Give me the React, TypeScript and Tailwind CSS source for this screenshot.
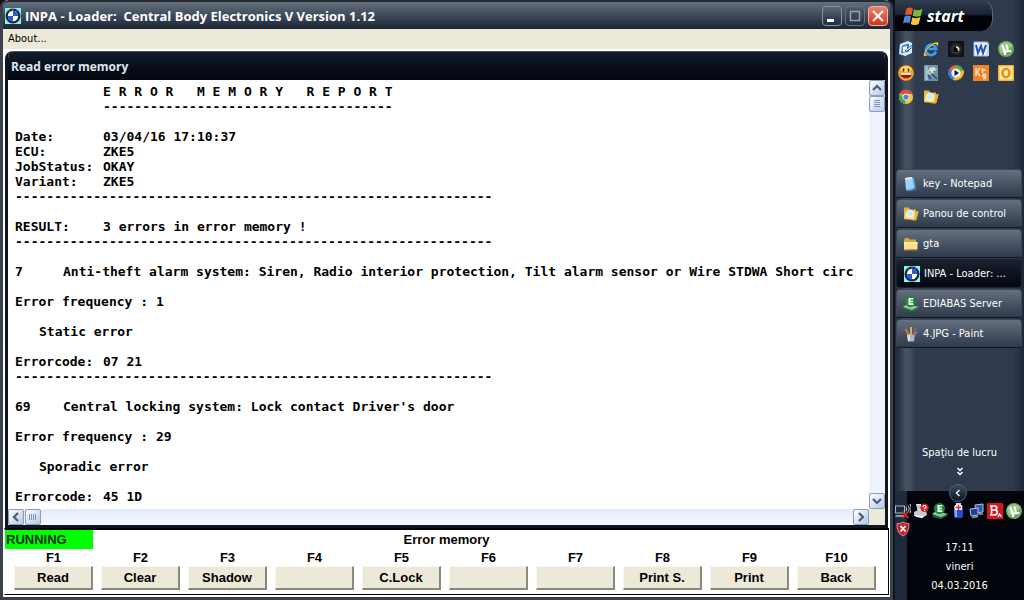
import type { ReactNode } from 'react';

const rule = '-'.repeat(61);

const header = [
  { label: 'Date:', value: '03/04/16 17:10:37' },
  { label: 'ECU:', value: 'ZKE5' },
  { label: 'JobStatus:', value: 'OKAY' },
  { label: 'Variant:', value: 'ZKE5' },
];

const errors = [
  {
    id: '7',
    text: 'Anti-theft alarm system: Siren, Radio interior protection, Tilt alarm sensor or Wire STDWA Short circ',
    frequency: '1',
    kind: 'Static error',
    code: '07 21',
  },
  {
    id: '69',
    text: "Central locking system: Lock contact Driver's door",
    frequency: '29',
    kind: 'Sporadic error',
    code: '45 1D',
  },
];

const functionKeys = [
  { id: 'F1', label: 'Read' },
  { id: 'F2', label: 'Clear' },
  { id: 'F3', label: 'Shadow' },
  { id: 'F4', label: '' },
  { id: 'F5', label: 'C.Lock' },
  { id: 'F6', label: '' },
  { id: 'F7', label: '' },
  { id: 'F8', label: 'Print S.' },
  { id: 'F9', label: 'Print' },
  { id: 'F10', label: 'Back' },
];

function Icon({ children }: { children: ReactNode }) {
  return <svg viewBox="0 0 16 16" className="w-4 h-4 shrink-0" aria-hidden="true">{children}</svg>;
}

function BmwIcon() {
  return (
    <Icon>
      <rect width="16" height="16" fill="#7df3f5" />
      <circle cx="8" cy="8" r="7.500" fill="#22253a" />
      <circle cx="8" cy="8" r="5.200" fill="#fff" />
      <path d="M8 8V2.800A5.200 5.200 0 0 1 13.200 8zM8 8v5.200A5.200 5.200 0 0 1 2.800 8z" fill="#2a5bd0" />
      <path d="M4 2.500l1 1M8 1.300v1M12 2.500l-1 1" stroke="#c9cede" strokeWidth=".8" />
    </Icon>
  );
}

function NotepadIcon() {
  return (
    <Icon>
      <path d="M4 1l7 1 2 12-9 1z" fill="#5fa9dc" />
      <path d="M2 2l7-1 2 11-8 2z" fill="#9bd4f5" />
      <path d="M2 2l7-1 .3 2-7 1z" fill="#d9e8f0" />
      <path d="M9 14l4-3 1 3z" fill="#2d6fa8" />
    </Icon>
  );
}

function FolderIcon() {
  return (
    <Icon>
      <path d="M1 4l1-2h4l1 1.500h6V13H1z" fill="#d9a62e" />
      <path d="M1 14V6h13.500v7.500z" fill="#fbe28a" />
      <path d="M1 6h13.500v1.500H1z" fill="#fff3bd" />
      <path d="M1 13.500h13.500v1H1z" fill="#b07e18" />
    </Icon>
  );
}

function SearchFolderIcon() {
  return (
    <Icon>
      <path d="M1 1.500h5l1 2h6v9.500H1z" fill="#e3b544" />
      <path d="M1 13L3 5.500h12.500l-2.500 9z" fill="#fbe28a" />
      <circle cx="7" cy="7.500" r="3.400" fill="#c8e8f8" stroke="#f8f6ec" />
      <path d="M12 5.500h3.500L13 14.500l-2-1z" fill="#e6b23c" />
      <path d="M1 13l12 1.500" stroke="#a87a1c" />
    </Icon>
  );
}

function EdiabasIcon() {
  return (
    <Icon>
      <path d="M0 11l4-3 12 3-6 4z" fill="#8cc79a" />
      <path d="M1 12l8 2 6-3v2l-6 3-8-2z" fill="#256b34" />
      <circle cx="7.500" cy="5.500" r="5.500" fill="#1c8a35" />
      <path d="M5.500 2h4.800v1.600H7.300v1.100h2.700v1.500H7.300v1.100h3v1.600H5.500z" fill="#fff" />
    </Icon>
  );
}

function PaintIcon() {
  return (
    <Icon>
      <path d="M4 8h8l-1 7.500H5z" fill="#a9b4c0" />
      <path d="M4 8h3v7H5z" fill="#dde5ec" />
      <path d="M6 9L2.500 3" stroke="#d5763e" strokeWidth="2" />
      <path d="M8 8V1" stroke="#d0b06a" strokeWidth="2" />
      <path d="M10 9l3-7" stroke="#b7553f" strokeWidth="2" />
      <path d="M11 9l3-3" stroke="#5c8fd0" strokeWidth="1.500" />
    </Icon>
  );
}

function DesktopIcon() {
  return (
    <Icon>
      <path d="M2 3l8-3 4 2v10l-7 3-6-2z" fill="#d6ecfb" />
      <path d="M4 4.500l7-2v8l-8 2z" fill="#3e86c9" />
      <path d="M5 6l4-1v5l-4 1z" fill="#fff" />
      <path d="M6.500 9.500L14 4l1.500 1.500L9 11z" fill="#2a5fa5" />
      <path d="M8 9.500l6-4" stroke="#fff" />
    </Icon>
  );
}

function ExplorerIcon() {
  return (
    <Icon>
      <path d="M13 10.500A5.200 5.200 0 1 1 13.200 8H5.500" fill="none" stroke="#3aa0ee" strokeWidth="2.600" />
      <path d="M1 15C-1 11 10 0 15 1.500c1 1 0 3-1 4 0-3-2-3-5-1C5 7 2 11 2.500 13c.5 1 2 0 3 0-1 1.500-3.500 3-4.500 2z" fill="#f3c33c" />
    </Icon>
  );
}

function LensIcon() {
  return (
    <Icon>
      <rect width="16" height="16" rx="1" fill="#121315" />
      <circle cx="8" cy="8" r="6" fill="#26282b" />
      <circle cx="8" cy="8.500" r="3.500" fill="#050505" stroke="#4a4a4a" />
      <path d="M8 5.500c3-.5 4 2 3 4.500l-1.500-.5c.5-1.500 0-2.500-1.500-2.500z" fill="#e0e0e0" />
    </Icon>
  );
}

function WordIcon() {
  return (
    <Icon>
      <path d="M1 1h12l3 2v12H1z" fill="#e8f1fb" />
      <path d="M1 1h14v14H1z" fill="none" stroke="#9dbce2" />
      <path d="M3 4l2 8 3-7 2 7 3-8" fill="none" stroke="#1e56a8" strokeWidth="2" />
    </Icon>
  );
}

function TorrentIcon() {
  return (
    <Icon>
      <circle cx="8" cy="8" r="8" fill="#6fa85c" />
      <path d="M1 6a8 8 0 0 1 14-1L3 13z" fill="#9cc68a" />
      <path d="M4 4l2.500 5.500c1 2 3.500 1.500 3.200-.5L8.500 3.500M10 9.500c1 1 2 .8 3-.2M5.500 8l1.800 6" fill="none" stroke="#fff" strokeWidth="2" />
    </Icon>
  );
}

function SmileyIcon() {
  return (
    <Icon>
      <circle cx="8" cy="8" r="7.800" fill="#f6a623" />
      <ellipse cx="8" cy="4" rx="5.500" ry="3" fill="#ffd95c" />
      <path d="M5.500 3.500v3M10.500 3.500v3" stroke="#4a1d00" strokeWidth="1.500" />
      <path d="M2 8h12c0 7-12 7-12 0z" fill="#a41717" />
      <path d="M2.500 8h11v1.800h-11z" fill="#fff" />
    </Icon>
  );
}

function MapIcon() {
  return (
    <Icon>
      <rect x="1" width="14" height="16" fill="#6f93ad" />
      <path d="M2 1h3v14H2z" fill="#9fb8c8" />
      <path d="M6 3l5-1 3 3-4 1 1 3-3-2z" fill="#d8dfc0" />
      <path d="M8 8l6 6M5 10l3 4" stroke="#2e4a60" strokeWidth="1.500" />
      <circle cx="7" cy="7" r="2" fill="none" stroke="#e9f3f7" />
    </Icon>
  );
}

function MediaIcon() {
  return (
    <Icon>
      <path d="M8 8V0a8 8 0 0 1 7.500 6z" fill="#57a944" />
      <path d="M8 8V0A8 8 0 0 0 1 5z" fill="#e76a26" />
      <path d="M8 8L1 4a8 8 0 0 0 4 11z" fill="#3c7ddd" />
      <path d="M8 8l8-3c1 6-5 12-11 10z" fill="#f3b72b" />
      <circle cx="8" cy="8" r="4.600" fill="#f4f7fb" />
      <path d="M6.500 5l4.500 3-4.500 3z" fill="#101a30" />
    </Icon>
  );
}

function KtIcon() {
  return (
    <Icon>
      <rect width="16" height="16" fill="#f08427" />
      <path d="M3 3v8M7 3L4 7l3 4M9.500 3v5M8.500 5h4M10 9.500h3M10 9.500v2h2.500v2H10" fill="none" stroke="#fbe3c8" strokeWidth="1.400" />
    </Icon>
  );
}

function OutlookIcon() {
  return (
    <Icon>
      <rect width="16" height="16" rx="1" fill="#f3b52e" />
      <rect x="1.500" y="1.500" width="13" height="13" fill="#fce9b0" />
      <ellipse cx="8" cy="8" rx="3.500" ry="4.300" fill="none" stroke="#e0930f" strokeWidth="2.600" />
    </Icon>
  );
}

function ChromeIcon() {
  return (
    <Icon>
      <circle cx="8" cy="8" r="7" fill="#f4c63d" />
      <path d="M8 8L2 4a7 7 0 0 1 12.500 1H8z" fill="#dd4b3b" />
      <path d="M8 8l-1 7A7 7 0 0 1 2 4.300L5.500 10z" fill="#4aa353" />
      <circle cx="8" cy="8" r="3.400" fill="#f1f3f5" />
      <circle cx="8" cy="8" r="2.600" fill="#4a86d8" />
    </Icon>
  );
}

function WirelessIcon() {
  return (
    <Icon>
      <rect x=".5" y="3" width="9" height="7" fill="#1b2740" stroke="#aab6cc" />
      <path d="M1 12h8l1 2H0z" fill="#8b95a8" />
      <path d="M11 4c1 1.500 1 2.500 0 4M13 2.500c1.500 2 1.500 4.500 0 6.500M15 1c1.500 3 1.500 6 0 9" fill="none" stroke="#d5d9e0" />
      <path d="M7.500 8.500l6 6.500M13.500 8.500l-6 6.500" stroke="#d8281e" strokeWidth="1.700" />
    </Icon>
  );
}

function PrinterIcon() {
  return (
    <Icon>
      <path d="M3 1h5l2 8H5z" fill="#f2f4f7" />
      <path d="M4 3h3M4.500 5h3" stroke="#8f9aac" />
      <path d="M1 9l4-2h8l1 5-5 3-8-2z" fill="#c5cbd4" />
      <path d="M2 12l8 1v2l-7-1z" fill="#eef0f3" />
      <circle cx="11.500" cy="4.800" r="4.200" fill="#d8231d" />
      <path d="M10 4c0-2 3-2 3 0 0 1-1.500 1-1.500 2.200M11.500 7v1" fill="none" stroke="#fff" strokeWidth="1.200" />
    </Icon>
  );
}

function BatteryIcon() {
  return (
    <Icon>
      <path d="M6 0h5v3H6z" fill="#d8dde6" />
      <rect x="4" y="2" width="9" height="13" rx="2" fill="#2a4bd0" />
      <path d="M4 3h3v11H5z" fill="#8fa6f2" />
      <path d="M5 2h7v5H5z" fill="#f0eef2" />
      <path d="M8.500 2v5M6 4.500h5" stroke="#d93030" strokeWidth="1.300" />
    </Icon>
  );
}

function NetworkIcon() {
  return (
    <Icon>
      <path d="M6 2l8-1v8l-7 1z" fill="#3558b8" stroke="#b2bfdc" />
      <path d="M1 6l8-1v7l-7 1z" fill="#23408f" stroke="#b2bfdc" />
      <path d="M3 14.500l6-1M10 11h4" stroke="#99a5bf" strokeWidth="1.500" />
    </Icon>
  );
}

function BitdefenderIcon() {
  return (
    <Icon>
      <rect width="16" height="16" rx="1" fill="#d9161c" />
      <path d="M4.500 3v9M3 3h4.500c3 0 3 4 0 4H5h3c3 0 3 5-.5 5H3" fill="none" stroke="#fff" strokeWidth="1.700" />
      <path d="M11 14l1.500-3 2 3" fill="none" stroke="#fff" strokeWidth="1.200" />
    </Icon>
  );
}

function ShieldIcon() {
  return (
    <Icon>
      <path d="M8 1c2 1.500 4 1.500 6 1.500 0 6-1 10-6 12.500C3 12.500 2 8.500 2 2.500 4 2.500 6 2.500 8 1z" fill="#c9202e" stroke="#d98b92" />
      <path d="M5.500 5l5 5.500M10.500 5l-5 5.500" stroke="#fff" strokeWidth="1.800" />
    </Icon>
  );
}

const quickLaunch = [
  { name: 'Show desktop', icon: <DesktopIcon /> },
  { name: 'Internet Explorer', icon: <ExplorerIcon /> },
  { name: 'Camera', icon: <LensIcon /> },
  { name: 'Word', icon: <WordIcon /> },
  { name: 'Torrent', icon: <TorrentIcon /> },
  { name: 'Messenger', icon: <SmileyIcon /> },
  { name: 'Maps', icon: <MapIcon /> },
  { name: 'Media player', icon: <MediaIcon /> },
  { name: 'KT', icon: <KtIcon /> },
  { name: 'Outlook', icon: <OutlookIcon /> },
  { name: 'Chrome', icon: <ChromeIcon /> },
  { name: 'Search folder', icon: <SearchFolderIcon /> },
];

const tasks = [
  { label: 'key - Notepad', icon: <NotepadIcon /> },
  { label: 'Panou de control', icon: <SearchFolderIcon /> },
  { label: 'gta', icon: <FolderIcon /> },
  { label: 'INPA - Loader: ...', icon: <BmwIcon />, active: true },
  { label: 'EDIABAS Server', icon: <EdiabasIcon /> },
  { label: '4.JPG - Paint', icon: <PaintIcon /> },
];

const tray = [
  { name: 'Wireless', icon: <WirelessIcon /> },
  { name: 'Printer', icon: <PrinterIcon /> },
  { name: 'EDIABAS', icon: <EdiabasIcon /> },
  { name: 'Battery', icon: <BatteryIcon /> },
  { name: 'Network', icon: <NetworkIcon /> },
  { name: 'Bitdefender', icon: <BitdefenderIcon /> },
  { name: 'Torrent', icon: <TorrentIcon /> },
  { name: 'Security', icon: <ShieldIcon /> },
];

const arrows = {
  up: 'M4 10l4-4 4 4',
  down: 'M4 6l4 4 4-4',
  left: 'M10 4L6 8l4 4',
  right: 'M6 4l4 4-4 4',
};

function ScrollButton({ dir }: { dir: keyof typeof arrows }) {
  return (
    <button aria-label={`Scroll ${dir}`} className="w-4 h-4 shrink-0 rounded-xs border border-[#8a9cb8] bg-linear-to-br from-white to-[#b3c8e8] flex items-center justify-center">
      <svg viewBox="0 0 16 16" className="w-4 h-4 shrink-0"><path d={arrows[dir]} fill="none" stroke="#4d5b72" strokeWidth="2.200" /></svg>
    </button>
  );
}

function Thumb({ vertical = false }: { vertical?: boolean }) {
  return (
    <div className="w-4 h-4 shrink-0 rounded-xs border border-[#8a9cb8] bg-linear-to-br from-white to-[#b3c8e8]">
      <svg viewBox="0 0 14 14" className="w-full h-full">
        <path d={vertical ? 'M4 3.500h6M4 5.500h6M4 7.500h6M4 9.500h6' : 'M3.500 4v6M5.500 4v6M7.500 4v6M9.500 4v6'} stroke="#8096b8" />
      </svg>
    </div>
  );
}

function TitleBar() {
  return (
    <header className="h-[29px] shrink-0 flex items-center gap-1 px-[2px] rounded-t-md border-t-2 border-[#262b33] bg-linear-to-b from-[#65707d] via-[#3c4757] via-55% to-[#1c2535]">
      <BmwIcon />
      <h1 className="flex-1 truncate whitespace-pre font-['Open_Sans','Noto_Sans',sans-serif] text-[13px] leading-5 font-bold text-white">INPA - Loader:  Central Body Electronics V Version 1.12</h1>
      <div className="flex gap-[3px]">
        <button aria-label="Minimize" className="w-5 h-5 rounded-sm border border-[#8791a0] bg-linear-to-b from-[#5b6676] to-[#242d3d]">
          <svg viewBox="0 0 18 18" className="w-full h-full"><path d="M4 12h7v3H4z" fill="#fff" /></svg>
        </button>
        <button aria-label="Maximize" disabled className="w-5 h-5 rounded-sm border border-[#667080] bg-linear-to-b from-[#525d6d] to-[#242d3d]">
          <svg viewBox="0 0 18 18" className="w-full h-full"><path d="M4.500 5v8.500h9V5M4 4.500h10" fill="none" stroke="#98a0ac" strokeWidth="1.500" /></svg>
        </button>
        <button aria-label="Close" className="w-5 h-5 rounded-sm border border-[#e9b9ae] bg-linear-to-b from-[#f0806a] to-[#d42f12]">
          <svg viewBox="0 0 18 18" className="w-full h-full"><path d="M4 4l10 10M14 4L4 14" stroke="#fff" strokeWidth="2.200" /></svg>
        </button>
      </div>
    </header>
  );
}

function Report() {
  return (
    <div className="flex-1 min-w-0 overflow-hidden pl-[7px] pt-1 whitespace-pre font-['DejaVu_Sans_Mono','Liberation_Mono',monospace] text-[13px] leading-[15px] font-bold text-black">
      <div className="pl-[88px]">
        <h3>{'E R R O R   M E M O R Y   R E P O R T'}</h3>
        <p>{'-'.repeat(37)}</p>
      </div>
      <dl className="mt-[15px]">
        {header.map((h) => (
          <div key={h.label} className="flex">
            <dt className="w-[88px]">{h.label}</dt>
            <dd>{h.value}</dd>
          </div>
        ))}
      </dl>
      <p>{rule}</p>
      <div className="mt-[15px] flex">
        <span className="w-[88px]">RESULT:</span>
        <span>3 errors in error memory !</span>
      </div>
      <p>{rule}</p>
      {errors.map((e, i) => (
        <section key={e.id}>
          {i > 0 && <p>{rule}</p>}
          <div className="mt-[15px] flex">
            <span className="w-12 shrink-0">{e.id}</span>
            <span>{e.text}</span>
          </div>
          <p className="mt-[15px]">Error frequency : {e.frequency}</p>
          <p className="mt-[15px] pl-6">{e.kind}</p>
          <div className="mt-[15px] flex">
            <span className="w-[88px]">Errorcode:</span>
            <span>{e.code}</span>
          </div>
        </section>
      ))}
    </div>
  );
}

function ReportWindow() {
  return (
    <section className="flex-1 min-h-0 flex flex-col mx-[2px] mt-[2px] border-[3px] border-t-0 border-[#10151d] rounded-t-lg overflow-hidden bg-white">
      <h2 className="h-[29px] shrink-0 flex items-center px-[3px] pt-[2px] border-t border-[#4c5460] bg-linear-to-b from-[#141c2c] to-[#03060d] font-['Open_Sans','Noto_Sans',sans-serif] text-[12px] font-bold text-[#dfe6f2]">Read error memory</h2>
      <div className="flex-1 min-h-0 flex">
        <Report />
        <div className="w-4 flex flex-col bg-[#eef3fd]">
          <ScrollButton dir="up" />
          <Thumb vertical />
          <div className="flex-1" />
          <ScrollButton dir="down" />
        </div>
      </div>
      <div className="flex shrink-0 bg-[#ece9d8] pr-4">
        <div className="flex-1 flex gap-px bg-linear-to-b from-[#e2ebfa] to-[#f6f9ff]">
          <ScrollButton dir="left" />
          <Thumb />
          <div className="flex-1" />
          <ScrollButton dir="right" />
        </div>
      </div>
    </section>
  );
}

function FunctionBar() {
  return (
    <footer className="shrink-0 h-[67px] mx-px mb-[2px] border border-t-2 border-l-white border-black bg-white font-['Liberation_Sans',Arial,sans-serif] text-[13px] leading-[19px] font-bold text-black">
      <div className="grid grid-cols-[88px_1fr_88px]">
        <span className="pl-px bg-[#00ff00] text-[#063006]">RUNNING</span>
        <span className="text-center">Error memory</span>
      </div>
      <div className="grid grid-cols-10 gap-2 pl-[9px] pr-3">
        {functionKeys.map((k) => (
          <div key={k.id} className="text-center">
            <label htmlFor={k.id} className="block leading-[17px]">{k.id}</label>
            <button id={k.id} className="block w-full h-6 leading-5 bg-[#ece9d8] border-r-2 border-b-2 border-t border-l border-t-[#f8f6ee] border-l-[#f8f6ee] border-r-[#8b897c] border-b-[#8b897c]">{k.label}</button>
          </div>
        ))}
      </div>
    </footer>
  );
}

function Sidebar() {
  return (
    <aside className="w-[131px] shrink-0 flex flex-col border-l-2 border-[#0d131d] bg-[linear-gradient(to_right,#1f2a3a_0%,#2b3748_4%,#465261_8%,#414d5c_12%,#2f3b4d_16%,#2f3b4d_92%,#1c2636_100%)] font-['DejaVu_Sans_Condensed','DejaVu_Sans',sans-serif] text-[11px] leading-4 text-white">
      <button className="w-[98px] h-[31px] flex items-center gap-1 pl-2 rounded-r-xl border-r border-[#5d6675] bg-linear-to-b from-[#323d50] via-[#1b2536] via-45% to-[#000208] to-55%">
        <svg viewBox="0 0 20 18" className="w-5 h-[18px] shrink-0">
          <path d="M3.500 1.500c2.500-1.500 4.500-1 6.500.2L8.500 8.300c-2-1.200-4-1.200-6.700 0z" fill="#e8562a" />
          <path d="M11 2.300c2 1.200 4.500 1.400 8.500-.3L17.800 8.800c-3 1.500-6 1.200-8.200 0z" fill="#7dbb3c" />
          <path d="M1.500 9.500c2.800-1.500 4.800-1.200 6.700 0L6.500 16.500c-2-1.200-4-1.200-6.500 0z" fill="#4f86dd" />
          <path d="M9.300 10.200c2 1.200 5 1.400 8.200-.2L15.700 17c-3 1.500-6 1.200-8 0z" fill="#f5c431" />
        </svg>
        <span className="font-['Open_Sans','Noto_Sans',sans-serif] text-[16px] leading-5 font-bold italic">start</span>
      </button>
      <nav aria-label="Quick launch" className="grid grid-cols-5 gap-y-2 pl-[3px] pr-px pt-[10px]">
        {quickLaunch.map((q) => (
          <button key={q.name} aria-label={q.name} className="w-4 h-4">{q.icon}</button>
        ))}
      </nav>
      <nav aria-label="Tasks" className="flex flex-col gap-px mt-16 ml-px mr-[2px]">
        {tasks.map((t) => (
          <button
            key={t.label}
            className={
              t.active
                ? 'h-[29px] flex items-center gap-1 pl-[7px] rounded-sm border border-[#1b2431] bg-linear-to-b from-[#1a2231] to-[#04070f]'
                : 'h-[29px] flex items-center gap-1 pl-[6px] rounded-sm border border-[#3e4857] border-b-[#111823] bg-linear-to-b from-[#667080] via-[#485464] via-50% to-[#303c4d]'
            }
          >
            {t.icon}
            <span className="whitespace-nowrap">{t.label}</span>
          </button>
        ))}
      </nav>
      <div className="flex-1" />
      <div className="flex flex-col items-center h-[46px]">
        <span>Spaţiu de lucru</span>
        <button aria-label="More" className="w-4 h-4 mt-[3px]">
          <svg viewBox="0 0 16 16" className="w-4 h-4"><path d="M5.500 4L8 6.500 10.500 4M5.500 8L8 10.500 10.500 8" fill="none" stroke="#fff" strokeWidth="1.500" /></svg>
        </button>
      </div>
      <div className="h-[109px] shrink-0 flex flex-col items-center border-l-12 border-[#1f2b3b] bg-[#02050b] relative">
        <button aria-label="Show hidden icons" className="absolute -top-[7px] left-[42px] w-[18px] h-[18px] rounded-full border border-[#566176] bg-linear-to-b from-[#3d4a60] to-[#101828]">
          <svg viewBox="0 0 16 16" className="w-4 h-4"><path d="M9.500 5L6.500 8l3 3" fill="none" stroke="#e4e9f1" strokeWidth="1.500" /></svg>
        </button>
        <div className="self-stretch grid grid-cols-7 gap-y-[2px] -ml-3 mt-3">
          {tray.map((t) => (
            <button key={t.name} aria-label={t.name} className="w-4 h-4">{t.icon}</button>
          ))}
        </div>
        <div className="text-center leading-[19px] mt-px mr-3">
          <p>17:11</p>
          <p>vineri</p>
          <p>04.03.2016</p>
        </div>
      </div>
    </aside>
  );
}

export default function App() {
  return (
    <div className="h-screen flex overflow-hidden bg-[#0d131d]">
      <main className="flex-1 min-w-0 flex flex-col rounded-t-lg border-x-[3px] border-b-[3px] border-[#3a414c] bg-white">
        <TitleBar />
        <nav className="h-5 shrink-0 flex items-center px-[5px] bg-[#ece9d8]">
          <button className="font-['DejaVu_Sans_Condensed','DejaVu_Sans',sans-serif] text-[11px] leading-4 text-black">About...</button>
        </nav>
        <ReportWindow />
        <FunctionBar />
      </main>
      <Sidebar />
    </div>
  );
}
